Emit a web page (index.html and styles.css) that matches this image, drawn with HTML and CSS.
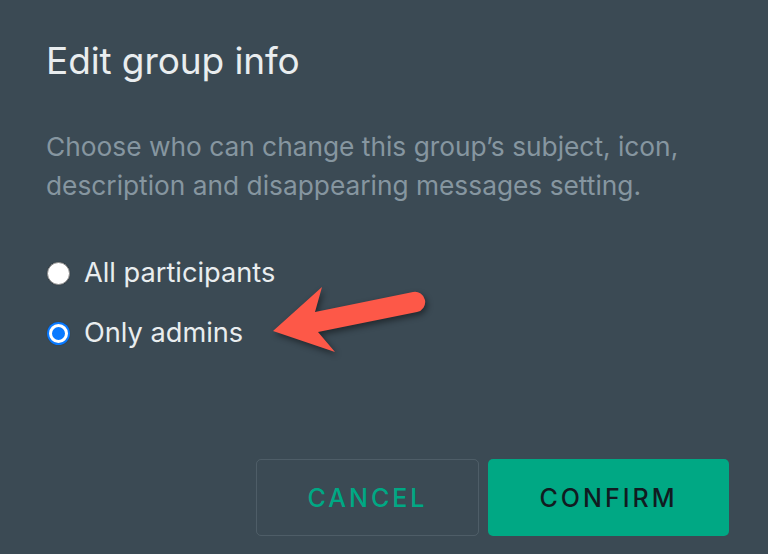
FILE: index.html
```html
<!DOCTYPE html>
<html lang="en">
<head>
<meta charset="utf-8">
<title>Edit group info</title>
<link rel="stylesheet" href="styles.css">
</head>
<body>
<div class="dialog">
  <h1 class="title">Edit group info</h1>
  <p class="desc">Choose who can change this group’s subject, icon,<br>description and disappearing messages setting.</p>
  <div class="options">
    <label class="option"><span class="radio"></span><span class="label">All participants</span></label>
    <label class="option"><span class="radio checked"></span><span class="label">Only admins</span></label>
  </div>
  <div class="actions">
    <button class="btn btn-cancel">CANCEL</button>
    <button class="btn btn-confirm">CONFIRM</button>
  </div>
  <svg class="arrow" width="180" height="90" viewBox="260 275 180 90" aria-hidden="true">
    <path d="M273,331 L322,287 L315,312 L413,292 A10,10 0 0 1 417,312 L318,332 L335,352 Z" fill="#fd5848"/>
  </svg>
</div>
</body>
</html>
```
FILE: styles.css
```css
html, body {
  margin: 0;
  padding: 0;
  background: #3b4a54;
}
body {
  font-family: Inter, "Noto Sans", sans-serif;
  width: 768px;
  height: 554px;
  overflow: hidden;
}
.dialog {
  position: relative;
  box-sizing: border-box;
  height: 554px;
  padding: 38px 39px 0 46px;
  display: flex;
  flex-direction: column;
}
.title {
  margin: 0;
  font-size: 37px;
  font-weight: 400;
  line-height: 45px;
  color: #e9edef;
  letter-spacing: -0.1px;
}
.desc {
  margin: 44px 0 0;
  font-size: 26.3px;
  line-height: 39px;
  color: #8696a0;
  white-space: nowrap;
}
.options {
  margin-top: 38px;
  display: flex;
  flex-direction: column;
}
.option {
  height: 60px;
  display: flex;
  align-items: center;
  gap: 14px;
  padding-left: 1px;
}
.radio {
  box-sizing: border-box;
  width: 23px;
  height: 23px;
  border-radius: 50%;
  background: #ffffff;
  border: 1px solid #8b8b8b;
  box-shadow: 0 0 1px rgba(0,0,0,0.4);
  position: relative;
  flex: none;
}
.radio.checked {
  background: #0a7aff;
  border: none;
}
.radio.checked::after {
  content: "";
  position: absolute;
  left: 2px;
  top: 2px;
  box-sizing: border-box;
  width: 19px;
  height: 19px;
  border-radius: 50%;
  border: 3px solid #ffffff;
  background: #0a7aff;
}
.label {
  font-size: 27.2px;
  color: #e9edef;
  line-height: 32px;
}
.actions {
  margin-top: auto;
  margin-bottom: 18px;
  display: flex;
  justify-content: flex-end;
  gap: 9px;
}
.btn {
  box-sizing: border-box;
  height: 77px;
  border-radius: 5px;
  font-family: Inter, "Noto Sans", sans-serif;
  font-size: 25px;
  font-weight: 500;
  letter-spacing: 3px;
  cursor: pointer;
}
.btn-cancel {
  width: 223px;
  background: transparent;
  border: 1px solid rgba(134,150,160,0.25);
  color: #00a884;
}
.btn-confirm {
  width: 241px;
  background: #00a884;
  border: none;
  color: #111b21;
}
.arrow {
  position: absolute;
  left: 260px;
  top: 275px;
  pointer-events: none;
  filter: drop-shadow(2px 3px 3px rgba(0,0,0,0.45));
}
```
